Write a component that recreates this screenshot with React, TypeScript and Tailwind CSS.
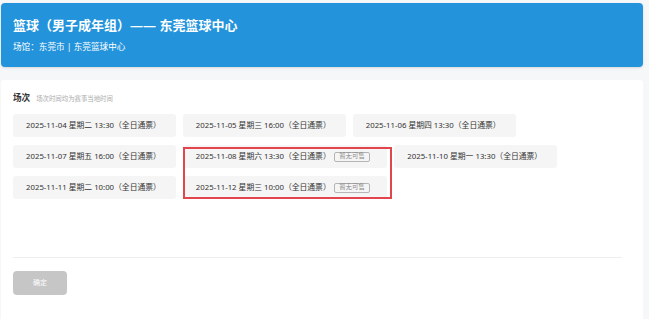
import React from "react";

const sessions = [
  { t: "2025-11-04 星期二 13:30（全日通票）", soldOut: false },
  { t: "2025-11-05 星期三 16:00（全日通票）", soldOut: false },
  { t: "2025-11-06 星期四 13:30（全日通票）", soldOut: false },
  { t: "2025-11-07 星期五 16:00（全日通票）", soldOut: false },
  { t: "2025-11-08 星期六 13:30（全日通票）", soldOut: true },
  { t: "2025-11-10 星期一 13:30（全日通票）", soldOut: false },
  { t: "2025-11-11 星期二 10:00（全日通票）", soldOut: false },
  { t: "2025-11-12 星期三 10:00（全日通票）", soldOut: true },
];

function Session({ t, soldOut }: { t: string; soldOut: boolean }) {
  return (
    <div
      className={
        soldOut
          ? "flex h-[23px] items-center gap-[3px] rounded-[3px] bg-[#f5f5f5] pl-[13px] pr-[17px] text-[7.8px] text-[#333]"
          : "flex h-[23px] items-center rounded-[3px] bg-[#f5f5f5] pl-[13px] pr-[15px] text-[7.8px] text-[#333]"
      }
    >
      <span className="whitespace-nowrap">{t}</span>
      {soldOut && (
        <span className="flex h-[10px] items-center rounded-[2px] border border-[#b5b5b5] px-[4.5px] text-[6.4px] leading-none text-[#888]">
          暂无可售
        </span>
      )}
    </div>
  );
}

export default function App() {
  return (
    <div
      className="min-h-[319px] bg-[#f5f7f8] pl-[1px] pr-[6px] pt-[3px]"
      style={{ fontFamily: '"Noto Sans", "Noto Sans CJK SC", sans-serif' }}
    >
      <div className="h-[64px] rounded-[4px] bg-[#2394dc] px-[12px] pt-[13px] text-white shadow-sm">
        <div className="text-[13px] font-bold leading-[18px]">篮球（男子成年组）—— 东莞篮球中心</div>
        <div className="mt-[7px] text-[8.6px] leading-[13px]">场馆：东莞市 | 东莞篮球中心</div>
      </div>

      <div className="mt-[13px] h-[240px] rounded-t-[3px] bg-white px-[12px] pt-[12px]">
        <div className="flex items-center gap-[6px]">
          <span className="text-[8.6px] font-bold leading-[13px] text-[#333]">场次</span>
          <span className="text-[6.4px] text-[#aaa]">场次时间均为赛事当地时间</span>
        </div>
        <div className="relative mt-[9px] flex w-[552px] flex-wrap gap-x-[7px] gap-y-[8px]">
          {sessions.map((s) => (
            <Session key={s.t} t={s.t} soldOut={s.soldOut} />
          ))}
          <div className="pointer-events-none absolute left-[170px] top-[33px] h-[52px] w-[209px] border-2 border-[#e1464f]" />
        </div>
        <div className="mt-[58px] mr-[9px] h-px bg-[#eeeeee]" />
        <button className="mt-[13px] flex h-[24px] w-[54px] items-center justify-center rounded-[4px] bg-[#c6c6c6] text-[7px] text-white">
          确定
        </button>
      </div>
    </div>
  );
}
